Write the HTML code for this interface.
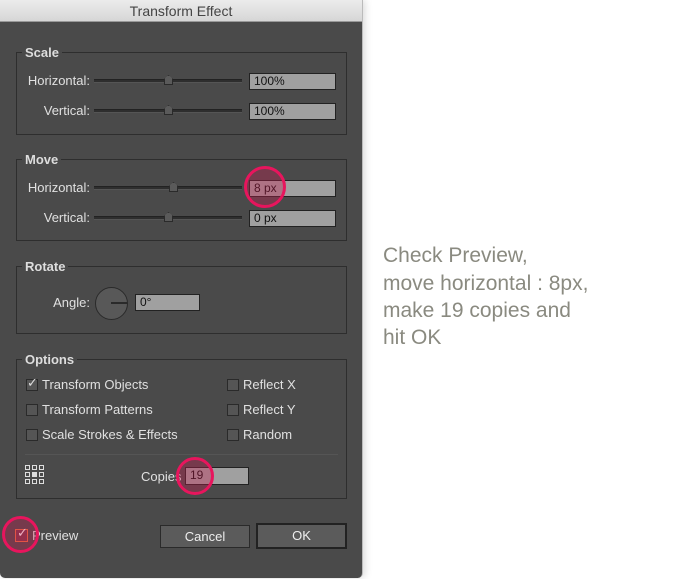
<!DOCTYPE html>
<html><head><style>
*{margin:0;padding:0;box-sizing:border-box}
body{width:695px;height:579px;background:#fff;position:relative;overflow:hidden;font-family:"Liberation Sans",sans-serif}
.a{position:absolute}
#dlg{left:0;top:0;width:363px;height:578px;background:#4a4a4a;border-right:1px solid #bbb;border-radius:0 0 5px 5px;box-shadow:2px 0 8px rgba(0,0,0,.15)}
#title{left:0;top:0;width:362px;height:22px;background:linear-gradient(#ececec,#d6d6d6);border-bottom:1px solid #999;text-align:center;font-size:14px;line-height:22px;color:#444}
.grp{border:1px solid #2e2e2e}
.lg{background:#4a4a4a;color:#ddd;font-size:13px;font-weight:bold;padding:0 3px;line-height:14px}
.lb{color:#e0e0e0;font-size:13px;line-height:14px;text-align:right}
.tr{height:4px;background:#2e2e2e;border-top:1px solid #222;border-bottom:1px solid #555}
.th{width:9px;height:10px;background:#5a5a5a;border:1px solid #2a2a2a;clip-path:polygon(50% 0,100% 40%,100% 100%,0 100%,0 40%)}
.in{background:#a0a0a0;border:1px solid #222;font-size:12px;line-height:15px;padding-left:4px;color:#111}
.cb{width:12px;height:12px;background:#555;border:1px solid #2a2a2a}
.ct{color:#e0e0e0;font-size:13px;line-height:14px}
.cir{border:3px solid #e8155d;border-radius:50%;background:rgba(200,30,80,.35)}
.btn{background:#5b5b5b;border:1px solid #2a2a2a;color:#eee;font-size:13px;text-align:center}
.note{left:383px;color:#8a8a80;font-size:21px;line-height:28px}
</style></head><body>
<div id="dlg" class="a"></div>
<div id="title" class="a">Transform Effect</div>

<div class="a grp" style="left:16px;top:52px;width:331px;height:83px"></div>
<div class="a lg" style="left:22px;top:46px">Scale</div>
<div class="a lb" style="left:0;top:74px;width:90px">Horizontal:</div>
<div class="a tr" style="left:94px;top:79px;width:148px"></div>
<div class="a th" style="left:164px;top:75px"></div>
<div class="a in" style="left:249px;top:73px;width:87px;height:17px">100%</div>
<div class="a lb" style="left:0;top:104px;width:90px">Vertical:</div>
<div class="a tr" style="left:94px;top:109px;width:148px"></div>
<div class="a th" style="left:164px;top:105px"></div>
<div class="a in" style="left:249px;top:103px;width:87px;height:17px">100%</div>

<div class="a grp" style="left:16px;top:159px;width:331px;height:82px"></div>
<div class="a lg" style="left:22px;top:153px">Move</div>
<div class="a lb" style="left:0;top:181px;width:90px">Horizontal:</div>
<div class="a tr" style="left:94px;top:186px;width:148px"></div>
<div class="a th" style="left:169px;top:182px"></div>
<div class="a in" style="left:249px;top:180px;width:87px;height:17px">8 px</div>
<div class="a lb" style="left:0;top:211px;width:90px">Vertical:</div>
<div class="a tr" style="left:94px;top:216px;width:148px"></div>
<div class="a th" style="left:164px;top:212px"></div>
<div class="a in" style="left:249px;top:210px;width:87px;height:17px">0 px</div>
<div class="a cir" style="left:244px;top:166px;width:42px;height:42px"></div>

<div class="a grp" style="left:16px;top:266px;width:331px;height:68px"></div>
<div class="a lg" style="left:22px;top:260px">Rotate</div>
<div class="a lb" style="left:0;top:296px;width:90px">Angle:</div>
<div class="a" style="left:95px;top:287px;width:33px;height:33px;border-radius:50%;background:#585858;border:1px solid #2a2a2a"></div>
<div class="a" style="left:111px;top:302px;width:16px;height:2px;background:#2a2a2a"></div>
<div class="a in" style="left:135px;top:294px;width:65px;height:17px">0°</div>

<div class="a grp" style="left:16px;top:359px;width:331px;height:140px"></div>
<div class="a lg" style="left:22px;top:353px">Options</div>
<div class="a cb" style="left:26px;top:379px"></div><div class="a" style="left:27px;top:375px;color:#ddd;font-size:13px">✓</div>
<div class="a ct" style="left:42px;top:378px">Transform Objects</div>
<div class="a cb" style="left:26px;top:404px"></div><div class="a ct" style="left:42px;top:403px">Transform Patterns</div>
<div class="a cb" style="left:26px;top:429px"></div><div class="a ct" style="left:42px;top:428px">Scale Strokes &amp; Effects</div>
<div class="a cb" style="left:227px;top:379px"></div><div class="a ct" style="left:243px;top:378px">Reflect X</div>
<div class="a cb" style="left:227px;top:404px"></div><div class="a ct" style="left:243px;top:403px">Reflect Y</div>
<div class="a cb" style="left:227px;top:429px"></div><div class="a ct" style="left:243px;top:428px">Random</div>
<div class="a" style="left:25px;top:454px;width:313px;height:1px;background:#333;border-bottom:1px solid #555"></div>
<svg class="a" style="left:25px;top:465px" width="20" height="19" viewBox="0 0 20 19" fill="none" stroke="#ddd" stroke-width="1">
<rect x="0.5" y="0.5" width="4" height="4"/><rect x="7.5" y="0.5" width="4" height="4"/><rect x="14.5" y="0.5" width="4" height="4"/>
<rect x="0.5" y="7.5" width="4" height="4"/><rect x="7.5" y="7.5" width="4" height="4" fill="#ddd"/><rect x="14.5" y="7.5" width="4" height="4"/>
<rect x="0.5" y="14.5" width="4" height="4"/><rect x="7.5" y="14.5" width="4" height="4"/><rect x="14.5" y="14.5" width="4" height="4"/></svg>
<div class="a ct" style="left:141px;top:470px">Copies</div>
<div class="a in" style="left:185px;top:467px;width:64px;height:18px">19</div>
<div class="a cir" style="left:176px;top:457px;width:38px;height:38px"></div>

<div class="a" style="left:15px;top:529px;width:13px;height:13px;border:1px solid #f07040;background:#7a3a4a"></div>
<div class="a" style="left:17px;top:525px;color:#fff;font-size:13px">✓</div>
<div class="a ct" style="left:32px;top:529px">Preview</div>
<div class="a cir" style="left:2px;top:516px;width:37px;height:37px"></div>
<div class="a btn" style="left:160px;top:525px;width:90px;height:23px;line-height:21px">Cancel</div>
<div class="a btn" style="left:256px;top:523px;width:91px;height:26px;line-height:22px;border:2px solid #222">OK</div>

<div class="a note" style="top:242px">Check Preview,</div>
<div class="a note" style="top:270px">move horizontal : 8px,</div>
<div class="a note" style="top:297px">make 19 copies and</div>
<div class="a note" style="top:324px">hit OK</div>
</body></html>
